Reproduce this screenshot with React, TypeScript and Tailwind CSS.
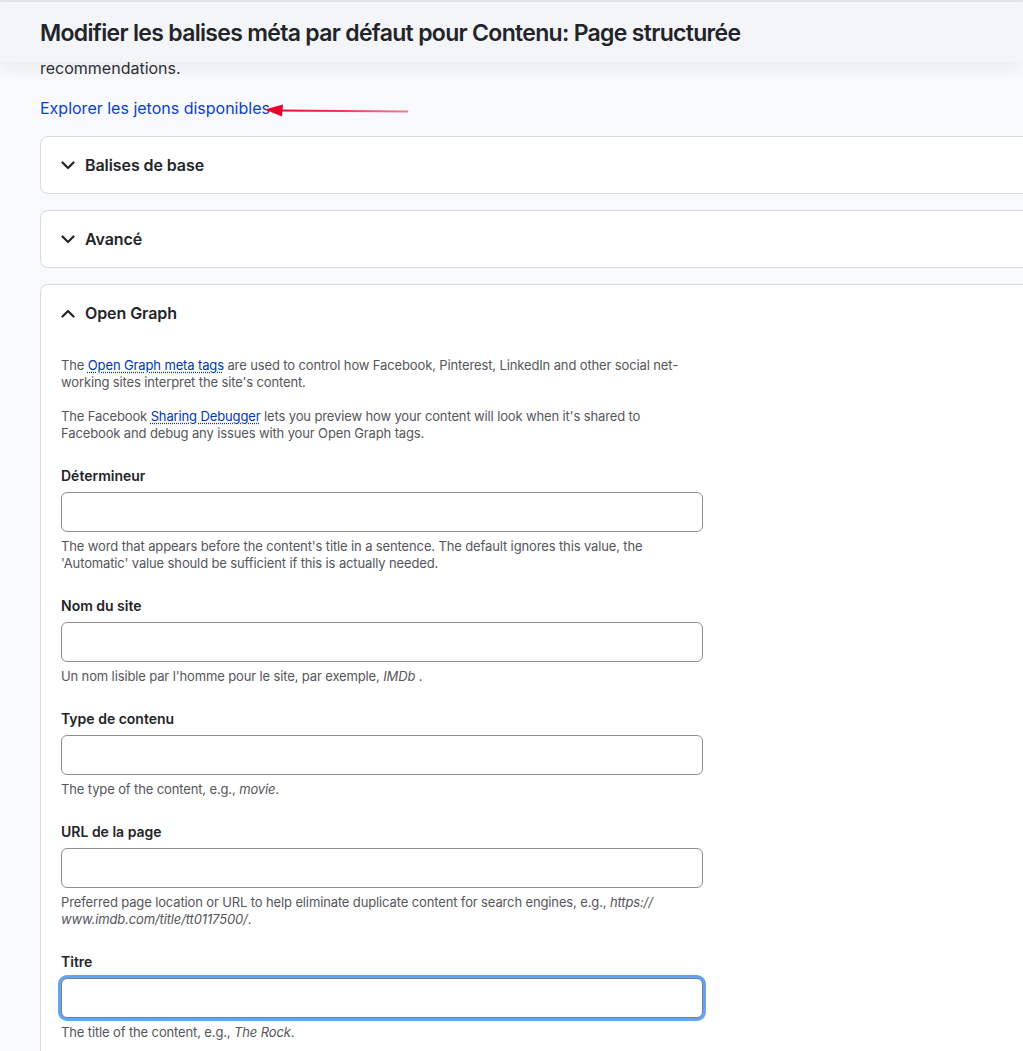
import React from "react";

const Chevron = ({ up = false }: { up?: boolean }) => (
  <svg width="14" height="9" viewBox="0 0 14 9" fill="none" className="shrink-0">
    {up ? (
      <polyline points="1.5,7.5 7,2 12.5,7.5" stroke="#232429" strokeWidth="2.2" strokeLinecap="round" strokeLinejoin="round" />
    ) : (
      <polyline points="1.5,1.5 7,7 12.5,1.5" stroke="#232429" strokeWidth="2.2" strokeLinecap="round" strokeLinejoin="round" />
    )}
  </svg>
);

const CollapsedCard = ({ title }: { title: string }) => (
  <div className="mr-[-40px] rounded-[8px] border border-[#d9dadf] bg-white">
    <div className="flex h-[56px] items-center gap-[10px] px-[20px]">
      <Chevron />
      <span className="text-[16px] font-semibold tracking-[-0.005em] text-[#232429]">{title}</span>
    </div>
  </div>
);

const Field = ({
  label,
  children,
  focused = false,
}: {
  label: string;
  children: React.ReactNode;
  focused?: boolean;
}) => (
  <div className="mt-[24px]">
    <div className="text-[14px] font-semibold leading-[20px] text-[#232429]">{label}</div>
    <input
      type="text"
      className={
        focused
          ? "mt-[6px] block h-[40px] w-[642px] rounded-[6px] border border-[#7b7d84] bg-white shadow-[0_0_0_3px_#63a4f5] outline-none"
          : "mt-[6px] block h-[40px] w-[642px] rounded-[6px] border border-[#8e9097] bg-white outline-none"
      }
    />
    <div className="mt-[6px] w-[642px] text-[13px] leading-[17px] tracking-[-0.01em] text-[#55565b]">{children}</div>
  </div>
);

export default function App() {
  return (
    <div className="relative min-h-[1051px] overflow-hidden bg-[#f8f9fc] font-['Inter',sans-serif]">
      <div className="h-[2px] bg-[#e3e4e8]" />
      <header className="relative z-10 flex h-[60px] items-center bg-[#f4f5f8] px-[40px] pt-[2px] shadow-[0_6px_14px_rgba(30,35,60,0.06)]">
        <h1 className="text-[23px] font-semibold leading-[30px] tracking-[-0.03em] text-[#232429]">
          Modifier les balises méta par défaut pour Contenu: Page structurée
        </h1>
      </header>
      <main className="pl-[40px]">
        <p className="-mt-[6px] text-[16px] leading-[24px] text-[#2f3036]">recommendations.</p>
        <div className="relative mt-[16px] h-[24px]">
          <a href="#" className="text-[16px] leading-[24px] text-[#0a3fcc]">
            Explorer les jetons disponibles
          </a>
          <svg
            className="absolute left-[224px] top-[8px]"
            width="146"
            height="14"
            viewBox="0 0 146 14"
          >
            <defs>
              <linearGradient id="arrowGrad" x1="0" y1="0" x2="1" y2="0">
                <stop offset="0" stopColor="#e8002b" />
                <stop offset="1" stopColor="#f27a95" />
              </linearGradient>
            </defs>
            <line x1="14" y1="6.5" x2="144" y2="7.5" stroke="url(#arrowGrad)" strokeWidth="2" />
            <polygon points="1,5.5 19,0.5 18,12.5" fill="#e8002b" />
          </svg>
        </div>

        <div className="mt-[16px] flex flex-col gap-[16px]">
          <CollapsedCard title="Balises de base" />
          <CollapsedCard title="Avancé" />
          <div className="mr-[-40px] rounded-[8px] border border-[#d9dadf] bg-white pb-[40px]">
            <div className="flex h-[56px] items-center gap-[10px] px-[20px]">
              <Chevron up />
              <span className="text-[16px] font-semibold tracking-[-0.005em] text-[#232429]">Open Graph</span>
            </div>
            <div className="px-[20px] pt-[16px]">
              <p className="w-[642px] text-[13px] leading-[17px] tracking-[-0.01em] text-[#55565b]">
                The{" "}
                <a href="#" className="text-[#0036b1] underline decoration-dotted underline-offset-2">
                  Open Graph meta tags
                </a>{" "}
                are used to control how Facebook, Pinterest, LinkedIn and other social net-
                <br />
                working sites interpret the site's content.
              </p>
              <p className="mt-[17px] w-[642px] text-[13px] leading-[17px] tracking-[-0.01em] text-[#55565b]">
                The Facebook{" "}
                <a href="#" className="text-[#0036b1] underline decoration-dotted underline-offset-2">
                  Sharing Debugger
                </a>{" "}
                lets you preview how your content will look when it's shared to
                <br />
                Facebook and debug any issues with your Open Graph tags.
              </p>

              <Field label="Détermineur">
                The word that appears before the content's title in a sentence. The default ignores this value, the
                <br />
                'Automatic' value should be sufficient if this is actually needed.
              </Field>
              <Field label="Nom du site">
                Un nom lisible par l'homme pour le site, par exemple, <em>IMDb</em> .
              </Field>
              <Field label="Type de contenu">
                The type of the content, e.g., <em>movie</em>.
              </Field>
              <Field label="URL de la page">
                Preferred page location or URL to help eliminate duplicate content for search engines, e.g., <em>https://</em>
                <br />
                <em>www.imdb.com/title/tt0117500/</em>.
              </Field>
              <Field label="Titre" focused>
                The title of the content, e.g., <em>The Rock</em>.
              </Field>
            </div>
          </div>
        </div>
      </main>
    </div>
  );
}
